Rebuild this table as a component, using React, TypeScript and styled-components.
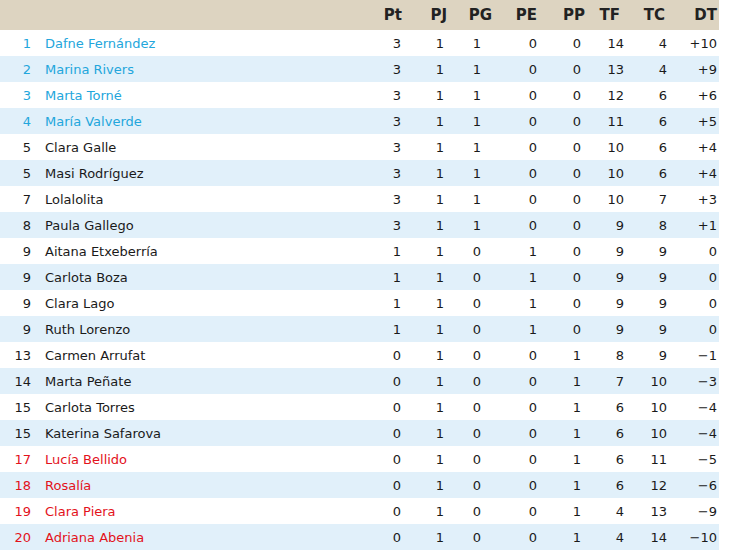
import React from "react";
import styled, { createGlobalStyle } from "styled-components";

const Global = createGlobalStyle`
  html, body { margin: 0; padding: 0; background: #ffffff; }
  body { font-family: "DejaVu Sans", Verdana, sans-serif; }
`;

type Zone = "top" | "mid" | "low";

interface Player {
  pos: number;
  name: string;
  stats: string[];
  zone: Zone;
}

interface Col {
  label: string;
  width: number;
  headPad: number;
  dataPad: number;
}

const COLS: Col[] = [
  { label: "Pt", width: 44, headPad: 2, dataPad: 3 },
  { label: "PJ", width: 45, headPad: 2, dataPad: 5 },
  { label: "PG", width: 45, headPad: 2, dataPad: 13 },
  { label: "PE", width: 45, headPad: 2, dataPad: 2 },
  { label: "PP", width: 48, headPad: 2, dataPad: 6 },
  { label: "TF", width: 37, headPad: 4, dataPad: 0 },
  { label: "TC", width: 45, headPad: 4, dataPad: 2 },
  { label: "DT", width: 50, headPad: 2, dataPad: 2 },
];

const raw: [number, string, string, Zone][] = [
  [1, "Dafne Fernández", "3 1 1 0 0 14 4 +10", "top"],
  [2, "Marina Rivers", "3 1 1 0 0 13 4 +9", "top"],
  [3, "Marta Torné", "3 1 1 0 0 12 6 +6", "top"],
  [4, "María Valverde", "3 1 1 0 0 11 6 +5", "top"],
  [5, "Clara Galle", "3 1 1 0 0 10 6 +4", "mid"],
  [5, "Masi Rodríguez", "3 1 1 0 0 10 6 +4", "mid"],
  [7, "Lolalolita", "3 1 1 0 0 10 7 +3", "mid"],
  [8, "Paula Gallego", "3 1 1 0 0 9 8 +1", "mid"],
  [9, "Aitana Etxeberría", "1 1 0 1 0 9 9 0", "mid"],
  [9, "Carlota Boza", "1 1 0 1 0 9 9 0", "mid"],
  [9, "Clara Lago", "1 1 0 1 0 9 9 0", "mid"],
  [9, "Ruth Lorenzo", "1 1 0 1 0 9 9 0", "mid"],
  [13, "Carmen Arrufat", "0 1 0 0 1 8 9 −1", "mid"],
  [14, "Marta Peñate", "0 1 0 0 1 7 10 −3", "mid"],
  [15, "Carlota Torres", "0 1 0 0 1 6 10 −4", "mid"],
  [15, "Katerina Safarova", "0 1 0 0 1 6 10 −4", "mid"],
  [17, "Lucía Bellido", "0 1 0 0 1 6 11 −5", "low"],
  [18, "Rosalía", "0 1 0 0 1 6 12 −6", "low"],
  [19, "Clara Piera", "0 1 0 0 1 4 13 −9", "low"],
  [20, "Adriana Abenia", "0 1 0 0 1 4 14 −10", "low"],
];

const PLAYERS: Player[] = raw.map(([pos, name, s, zone]) => ({
  pos,
  name,
  stats: s.split(" "),
  zone,
}));

const zoneColor: Record<Zone, string> = {
  top: "#23a6dc",
  mid: "#1a1a1a",
  low: "#e3121b",
};

const template = `33px 1fr ${COLS.map((c) => `${c.width}px`).join(" ")}`;

const Table = styled.div`
  width: 719px;
  display: flex;
  flex-direction: column;
  font-family: "DejaVu Sans", Verdana, sans-serif;
  font-size: 13px;
  color: #1a1a1a;
`;

const HeadRow = styled.div`
  display: grid;
  grid-template-columns: ${template};
  height: 30px;
  align-items: center;
  background: #ddd4c1;
  font-size: 15px;
  font-weight: bold;
  color: #222222;
`;

const Row = styled.div<{ $alt: boolean }>`
  display: grid;
  grid-template-columns: ${template};
  height: 26px;
  align-items: center;
  background: ${(p) => (p.$alt ? "#e1f0fa" : "#ffffff")};
`;

const HeadCell = styled.div<{ $pad: number }>`
  text-align: right;
  padding-right: ${(p) => p.$pad}px;
  white-space: nowrap;
`;

const PosCell = styled.div<{ $zone: Zone }>`
  text-align: right;
  padding-right: 2px;
  color: ${(p) => zoneColor[p.$zone]};
`;

const NameCell = styled.div<{ $zone: Zone }>`
  padding-left: 12px;
  color: ${(p) => zoneColor[p.$zone]};
  white-space: nowrap;
`;

const NumCell = styled.div<{ $pad: number }>`
  text-align: right;
  padding-right: ${(p) => p.$pad}px;
  white-space: nowrap;
`;

export default function App() {
  return (
    <>
      <Global />
      <Table>
        <HeadRow>
          <div />
          <div />
          {COLS.map((c) => (
            <HeadCell key={c.label} $pad={c.headPad}>
              {c.label}
            </HeadCell>
          ))}
        </HeadRow>
        {PLAYERS.map((p, i) => (
          <Row key={p.name} $alt={i % 2 === 1}>
            <PosCell $zone={p.zone}>{p.pos}</PosCell>
            <NameCell $zone={p.zone}>{p.name}</NameCell>
            {p.stats.map((v, j) => (
              <NumCell key={j} $pad={COLS[j].dataPad}>
                {v}
              </NumCell>
            ))}
          </Row>
        ))}
      </Table>
    </>
  );
}
